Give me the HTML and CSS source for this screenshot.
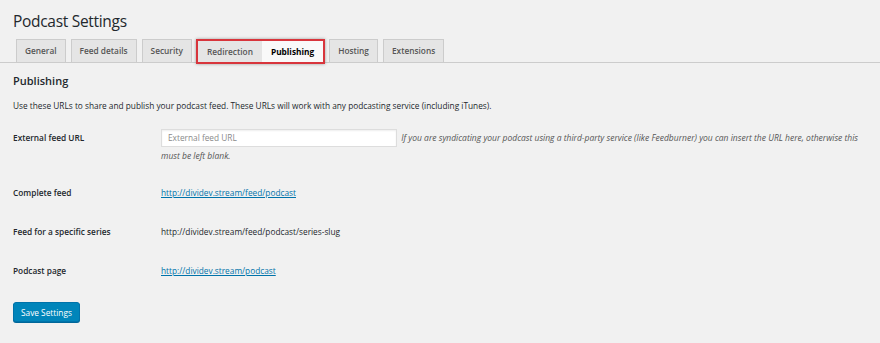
FILE: index.html
```html
<!DOCTYPE html>
<html lang="en">
<head>
  <meta charset="UTF-8" />
  <title>Podcast Settings</title>
  <link rel="stylesheet" href="styles.css">
</head>
<body>
  <div class="wrap">
    <h1 class="page-title">Podcast Settings</h1>

    <!-- Tabs -->
    <nav class="nav-tabs">
      <a class="tab" href="#">General</a>
      <a class="tab" href="#">Feed details</a>
      <a class="tab" href="#">Security</a>
      <span class="tab-highlight">
        <a class="tab" href="#">Redirection</a>
        <a class="tab active" href="#">Publishing</a>
      </span>
      <a class="tab" href="#">Hosting</a>
      <a class="tab" href="#">Extensions</a>
    </nav>

    <!-- Publishing section -->
    <h2 class="section-title">Publishing</h2>
    <p class="section-desc">Use these URLs to share and publish your podcast feed. These URLs will work with any podcasting service (including iTunes).</p>

    <div class="form-table">
      <div class="form-row first">
        <div class="form-label">External feed URL</div>
        <div class="form-field">
          <input type="text" class="text-input" placeholder="External feed URL">
          <em class="help">If you are syndicating your podcast using a third-party service (like Feedburner) you can insert the URL here, otherwise this must be left blank.</em>
        </div>
      </div>
      <div class="form-row">
        <div class="form-label">Complete feed</div>
        <div class="form-field"><a href="#">http://dividev.stream/feed/podcast</a></div>
      </div>
      <div class="form-row">
        <div class="form-label">Feed for a specific series</div>
        <div class="form-field">http://dividev.stream/feed/podcast/series-slug</div>
      </div>
      <div class="form-row">
        <div class="form-label">Podcast page</div>
        <div class="form-field"><a href="#">http://dividev.stream/podcast</a></div>
      </div>
    </div>

    <button class="btn-primary" type="button">Save Settings</button>
  </div>
</body>
</html>
```

FILE: styles.css
```css
* {
  margin: 0;
  padding: 0;
  box-sizing: border-box;
}

body {
  background: #f1f1f1;
  color: #23282d;
  font-family: 'Open Sans', 'Noto Sans', sans-serif;
  font-size: 8.3px;
  width: 880px;
  height: 343px;
  overflow: hidden;
}

.wrap {
  padding: 0 0 0 13px;
}

/* ========== Title ========== */
.page-title {
  font-size: 15.5px;
  font-weight: 400;
  letter-spacing: -0.3px;
  line-height: 20px;
  padding-top: 11px;
  height: 39px;
  color: #23282d;
}

/* ========== Tabs ========== */
.nav-tabs {
  display: flex;
  align-items: flex-end;
  gap: 5px;
  margin-left: -13px;
  padding-left: 16px;
  border-bottom: 1px solid #ccc;
  height: 24px;
}

.tab {
  display: block;
  height: 23px;
  line-height: 22px;
  padding: 0 8px;
  background: #e5e5e5;
  border: 1px solid #ccc;
  border-bottom: none;
  color: #555;
  font-weight: 600;
  font-size: 8.3px;
  text-decoration: none;
}

.tab.active {
  background: #f9f9f9;
  color: #000;
  font-weight: 700;
  border-color: #e0e0e0;
}

.tab-highlight {
  display: flex;
  border: 2px solid #d8353c;
  box-shadow: 0 0 3px rgba(0, 0, 0, 0.35);
  height: 25px;
  margin: -2px -1px -2px -1px;
}

.tab-highlight .tab {
  height: 21px;
  line-height: 21px;
  border: none;
  padding: 0 9px;
}

/* ========== Section ========== */
.section-title {
  font-size: 11px;
  font-weight: 600;
  line-height: 14px;
  margin-top: 11px;
}

.section-desc {
  margin-top: 12px;
  line-height: 12px;
}

/* ========== Form table ========== */
.form-table {
  margin-top: 17px;
}

.form-row {
  display: flex;
  align-items: flex-start;
  height: 39px;
}

.form-row.first {
  height: 58px;
}

.form-row:last-child {
  height: 37px;
}

.form-label {
  width: 148px;
  flex: none;
  font-weight: 600;
  line-height: 12px;
  padding-top: 3px;
}

.form-row:not(.first) .form-label {
  padding-top: 0;
}

.form-field {
  flex: 1;
  line-height: 12px;
  padding-right: 10px;
}

.form-row.first .form-field {
  line-height: 18px;
}

.form-field a {
  color: #0073aa;
}

.text-input {
  width: 236px;
  height: 18px;
  border: 1px solid #ddd;
  background: #fff;
  box-shadow: inset 0 1px 2px rgba(0, 0, 0, 0.07);
  font: inherit;
  padding: 0 6px;
  vertical-align: top;
  margin-right: 2px;
}

.text-input::placeholder {
  color: #8a8a8a;
}

.help {
  color: #555;
  font-size: 8.5px;
}

/* ========== Button ========== */
.btn-primary {
  height: 20px;
  padding: 0 7px;
  background: #0085ba;
  border: 1px solid #0073aa;
  border-radius: 3px;
  color: #fff;
  font-family: inherit;
  font-size: 8.3px;
  box-shadow: 0 1px 0 #006799;
}
```
